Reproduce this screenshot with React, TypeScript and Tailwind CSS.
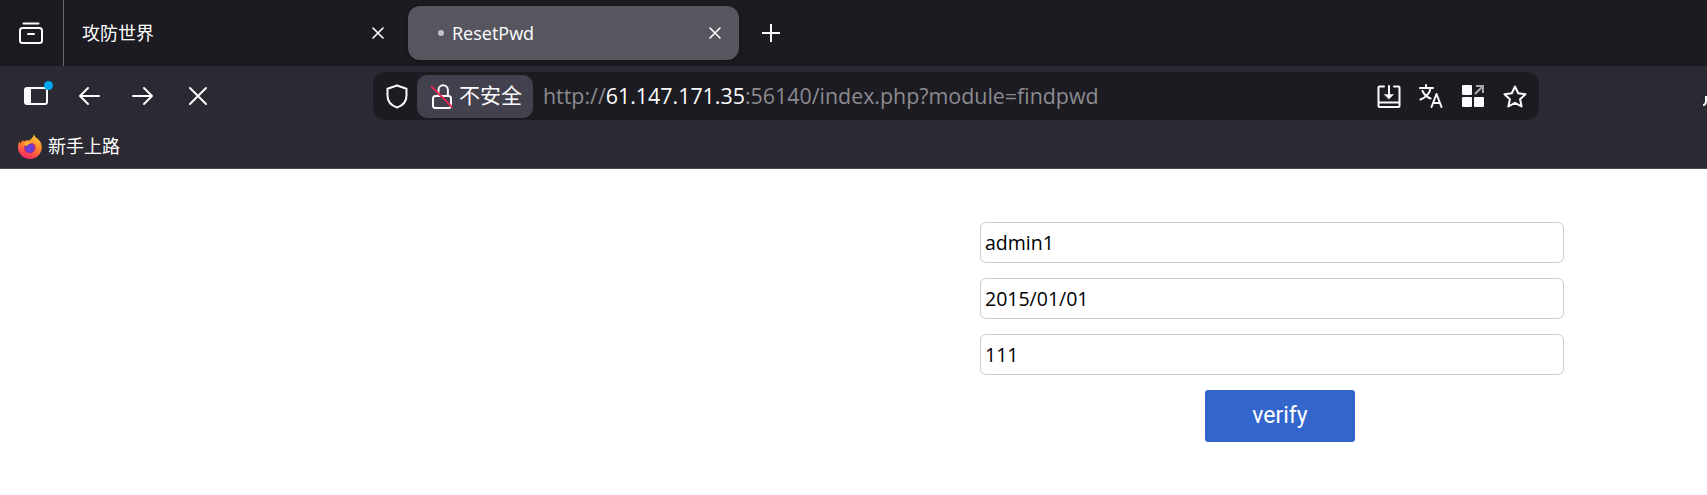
const ui = "font-['Open_Sans','Noto_Sans_CJK_SC',sans-serif]";

function CloseIcon({ size = 12, stroke = 1.6 }: { size?: number; stroke?: number }) {
  return (
    <svg width={size} height={size} viewBox="0 0 12 12" fill="none" stroke="currentColor" strokeWidth={stroke} strokeLinecap="round">
      <path d="M1 1l10 10M11 1L1 11" />
    </svg>
  );
}

function FirefoxLogo() {
  return (
    <svg width="24" height="25" viewBox="0 0 24 25">
      <defs>
        <linearGradient id="fx" x1="0.75" y1="0" x2="0.35" y2="1">
          <stop offset="0" stopColor="#ffd02e" />
          <stop offset="0.45" stopColor="#ff8a2b" />
          <stop offset="0.8" stopColor="#ff4a4a" />
          <stop offset="1" stopColor="#f0256f" />
        </linearGradient>
      </defs>
      <path d="M16 0c.2 2 1.300 3.100 3 4.300 2.800 2 4.800 5.200 4.800 8.700 0 6.600-5.300 12-11.900 12S0 19.600 0 13c0-2 .4-3.800 1.400-5.500.3 1 .7 1.500 1.200 1.900.3-1.500 1.300-2.800 2.600-3.500-.1.900.2 1.300.7 1.700C7.500 6.500 9.500 6.100 11.300 6.400 13.500 5.300 15.500 2.800 16 0z" fill="url(#fx)" />
      <circle cx="11.800" cy="13.700" r="5.800" fill="#b32a86" />
      <circle cx="11.800" cy="14.200" r="4.300" fill="#6b3fd4" />
      <path d="M5.500 11c2-3.600 7.200-4.300 10.200-1.500-2.300-.6-4.700-.1-5.700 1.300-.3.800-1.500 1.100-2.200.9z" fill="#ffb12e" />
    </svg>
  );
}

function TabStrip() {
  return (
    <div className="flex h-[66px] bg-[#1c1b22] text-white">
      <div className="flex w-[64px] items-center justify-center border-r border-[#6b6a72] pr-[2px]">
        <svg width="26" height="26" viewBox="0 0 26 26" fill="none" stroke="#fbfbfe" strokeWidth="2" strokeLinecap="round" strokeLinejoin="round">
          <rect x="2" y="8" width="22" height="15" rx="2.500" />
          <path d="M5.500 3.500h15M10 14h6" />
        </svg>
      </div>
      <div className="flex w-[344px] items-center pr-[24px] pl-[18px]">
        <span className={`flex-1 text-[18px] ${ui}`}>攻防世界</span>
        <CloseIcon />
      </div>
      <div className="mt-[6px] flex h-[54px] w-[331px] items-center rounded-[12px] bg-[#57565f] pr-[18px] pl-[30px] shadow-[0_1px_4px_rgba(0,0,0,0.4)]">
        <span className="mr-[8px] h-[6px] w-[6px] rounded-full bg-[#c4c4c8]" />
        <span className={`flex-1 text-[18px] ${ui}`}>ResetPwd</span>
        <CloseIcon />
      </div>
      <div className="flex w-[64px] items-center justify-center">
        <svg width="18" height="18" viewBox="0 0 18 18" fill="none" stroke="#fbfbfe" strokeWidth="2">
          <path d="M9 0v18M0 9h18" />
        </svg>
      </div>
    </div>
  );
}

function NavBar() {
  return (
    <div className="flex h-[60px] items-center bg-[#2b2a33] text-[#fbfbfe]">
      <div className="relative ml-[24px] h-[18px] w-[24px]">
        <div className="h-full w-full rounded-[3px] border-[2px] border-l-[7px] border-[#fbfbfe]" />
        <span className="absolute top-[-6px] right-[-5px] h-[9px] w-[9px] rounded-full bg-[#00a6f0]" />
      </div>
      <svg className="ml-[30px]" width="22" height="20" viewBox="0 0 22 20" fill="none" stroke="currentColor" strokeWidth="2" strokeLinecap="round" strokeLinejoin="round">
        <path d="M21 10H2M10 2l-8 8 8 8" />
      </svg>
      <svg className="ml-[32px]" width="22" height="20" viewBox="0 0 22 20" fill="none" stroke="currentColor" strokeWidth="2" strokeLinecap="round" strokeLinejoin="round">
        <path d="M1 10h19M12 2l8 8-8 8" />
      </svg>
      <svg className="ml-[34px]" width="20" height="20" viewBox="0 0 20 20" fill="none" stroke="currentColor" strokeWidth="2" strokeLinecap="round">
        <path d="M2 2l16 16M18 2L2 18" />
      </svg>
      <div className="ml-[165px] flex h-[48px] w-[1166px] items-center rounded-[12px] bg-[#1c1b22] pr-[12px] pl-[13px]">
        <svg width="22" height="25" viewBox="0 0 22 25" fill="none" stroke="currentColor" strokeWidth="2" strokeLinejoin="round">
          <path d="M11 1.500l9.500 3.200v7c0 5.500-3.800 9.800-9.500 11.800C5.300 21.500 1.500 17.200 1.500 11.700v-7L11 1.500z" />
        </svg>
        <div className="ml-[9px] flex h-[43px] w-[116px] items-center rounded-[10px] bg-[#42414d] pl-[14px]">
          <svg width="22" height="26" viewBox="0 0 22 26" fill="none" stroke="currentColor" strokeWidth="2">
            <rect x="2" y="13" width="18" height="12" rx="2.500" />
            <path d="M7.500 13V7a4.700 4.700 0 0 1 9.400 0v6" />
            <path d="M0 3l21 21" stroke="#e22850" />
          </svg>
          <span className={`ml-[6px] text-[21px] ${ui}`}>不安全</span>
        </div>
        <div className={`ml-[10px] flex-1 pt-[1px] text-[21.4px] text-[#8b8b90] ${ui}`}>
          http://<span className="text-[#fbfbfe]">61.147.171.35</span>:56140/index.php?module=findpwd
        </div>
        <svg width="24" height="23" viewBox="0 0 24 23" fill="none" stroke="currentColor" strokeWidth="2" strokeLinecap="round" strokeLinejoin="round">
          <path d="M7 1.500H2.500a1 1 0 0 0-1 1V21a1 1 0 0 0 1 1h19a1 1 0 0 0 1-1V2.500a1 1 0 0 0-1-1H17M1.500 17.500h21M12 1v10" />
          <path d="M7.500 9.500h9L12 14z" fill="currentColor" strokeWidth="0.500" />
        </svg>
        <svg className="ml-[18px]" width="24" height="24" viewBox="0 0 24 24" fill="none" stroke="currentColor" strokeWidth="2" strokeLinecap="round" strokeLinejoin="round">
          <path d="M1 4h13M7 1v3M11.500 4c-.5 4.500-4 9-10 11.500M3.500 7c1.500 3.500 4.500 6 8 7.500M12.500 23l5-13 5 13M14.300 19h6.400" />
        </svg>
        <div className="ml-[19px] grid h-[22px] w-[22px] grid-cols-[10px_10px] grid-rows-[10px_10px] gap-[2px]">
          <span className="rounded-[1px] bg-[#fbfbfe]" />
          <svg className="block" width="10" height="10" viewBox="0 0 10 10" fill="none" stroke="#a5a5ac" strokeWidth="2.200">
            <path d="M2 1h7v7M9 1L1 9" />
          </svg>
          <span className="rounded-[1px] bg-[#fbfbfe]" />
          <span className="rounded-[1px] bg-[#fbfbfe]" />
        </div>
        <svg className="ml-[19px]" width="24" height="23" viewBox="0 0 24 23" fill="none" stroke="currentColor" strokeWidth="2" strokeLinejoin="round">
          <path d="M12 1.500l3.200 6.800 7.300.9-5.400 5 1.500 7.300-6.600-3.700-6.600 3.700 1.500-7.300-5.400-5 7.300-.9z" />
        </svg>
      </div>
      <svg className="mt-[10px] ml-auto" width="4" height="10" viewBox="0 0 4 10" fill="none" stroke="#fbfbfe" strokeWidth="2">
        <path d="M3 0v5c0 2.500-1 4-3 4" />
      </svg>
    </div>
  );
}

function BookmarksBar() {
  return (
    <div className="flex h-[43px] items-center border-b border-[#4a4953] bg-[#2b2a33] pb-[2px] pl-[18px] text-white">
      <FirefoxLogo />
      <span className={`ml-[6px] text-[18px] ${ui}`}>新手上路</span>
    </div>
  );
}

function Field({ value }: { value: string }) {
  return (
    <input
      readOnly
      value={value}
      className="h-[41px] w-full rounded-[6px] border border-[#cccccc] bg-white px-[4px] font-['Open_Sans',sans-serif] text-[19.5px] text-black outline-none"
    />
  );
}

export default function App() {
  return (
    <div className="h-[495px] overflow-hidden bg-white">
      <TabStrip />
      <NavBar />
      <BookmarksBar />
      <div className="flex justify-end pt-[53px] pr-[143px]">
        <form className="flex w-[584px] flex-col gap-[15px]">
          <Field value="admin1" />
          <Field value="2015/01/01" />
          <Field value="111" />
          <button
            type="button"
            className="ml-[225px] h-[52px] w-[150px] rounded-[3px] bg-[#3366cc] font-['Roboto',sans-serif] text-[23px] text-white"
          >
            verify
          </button>
        </form>
      </div>
    </div>
  );
}
